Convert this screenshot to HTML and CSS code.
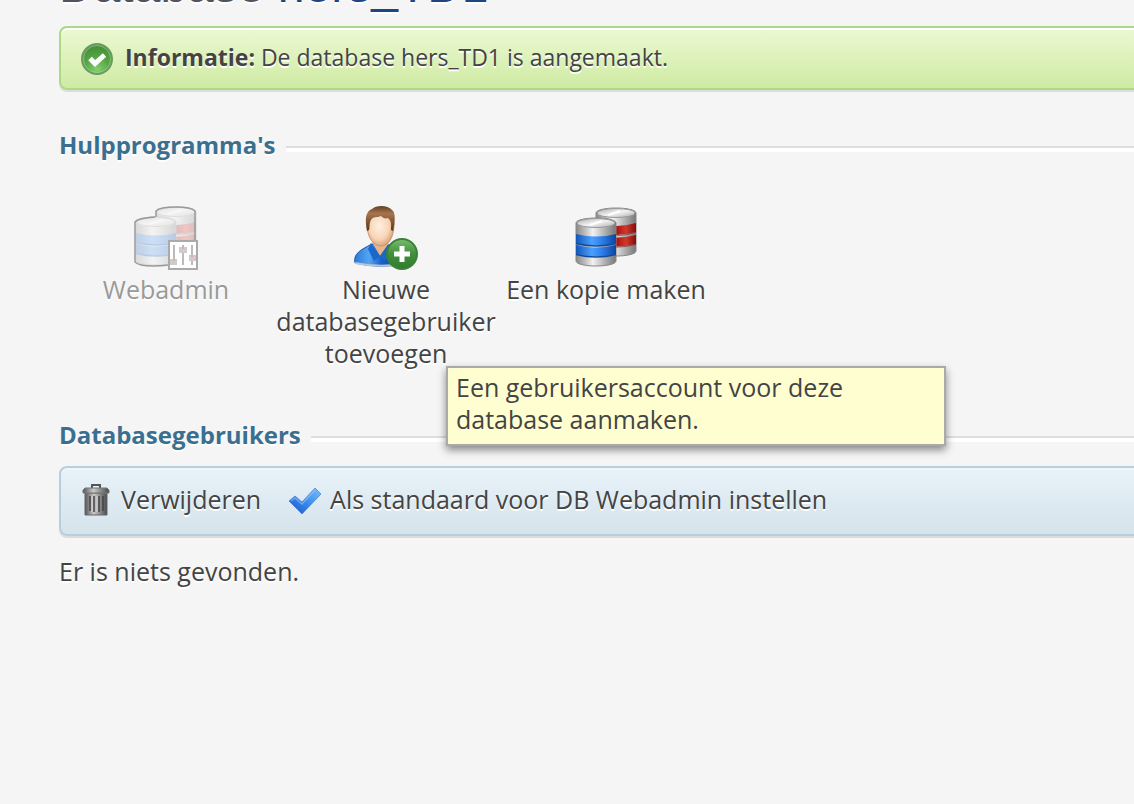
FILE: index.html
```html
<!DOCTYPE html>
<html lang="nl">
<head>
<meta charset="utf-8">
<title>Database hers_TD1</title>
<link rel="stylesheet" href="styles.css">
</head>
<body>
<svg class="defs" aria-hidden="true">
  <defs>
    <linearGradient id="metal"><stop offset="0" stop-color="#888"/><stop offset=".22" stop-color="#bbb"/><stop offset=".42" stop-color="#f2f2f2"/><stop offset=".75" stop-color="#aaa"/><stop offset="1" stop-color="#777"/></linearGradient>
    <linearGradient id="lid" x2="1" y2="1"><stop offset="0" stop-color="#aaa"/><stop offset=".5" stop-color="#f3f3f3"/><stop offset="1" stop-color="#aaa"/></linearGradient>
    <linearGradient id="blue"><stop offset="0" stop-color="#1356b8"/><stop offset=".4" stop-color="#4ba0ff"/><stop offset=".7" stop-color="#2877e2"/><stop offset="1" stop-color="#0c43a0"/></linearGradient>
    <linearGradient id="red"><stop offset="0" stop-color="#a3120e"/><stop offset=".5" stop-color="#a9100c"/><stop offset=".75" stop-color="#d2382d"/><stop offset="1" stop-color="#830d08"/></linearGradient>
    <radialGradient id="green" cx=".5" cy=".85" r=".85"><stop offset="0" stop-color="#86cf70"/><stop offset=".5" stop-color="#55a543"/><stop offset="1" stop-color="#408a38"/></radialGradient>
    <linearGradient id="plus" x2="0" y2="1"><stop offset="0" stop-color="#79bd70"/><stop offset=".5" stop-color="#3f8f3b"/><stop offset="1" stop-color="#2f7d2c"/></linearGradient>
    <radialGradient id="face" cx=".45" cy=".45" r=".6"><stop offset="0" stop-color="#fff0e2"/><stop offset=".6" stop-color="#f8d5b7"/><stop offset="1" stop-color="#d49a70"/></radialGradient>
    <linearGradient id="hair" x2="0" y2="1"><stop offset="0" stop-color="#66401f"/><stop offset=".3" stop-color="#a5754f"/><stop offset="1" stop-color="#5b3517"/></linearGradient>
    <linearGradient id="shirt"><stop offset="0" stop-color="#2b7bd5"/><stop offset=".3" stop-color="#55a5f5"/><stop offset=".55" stop-color="#1762c5"/><stop offset="1" stop-color="#0b429a"/></linearGradient>
    <linearGradient id="tick" x1="0" y1="1" x2="1" y2="0"><stop offset="0" stop-color="#1550c4"/><stop offset=".5" stop-color="#3b8bec"/><stop offset="1" stop-color="#7bc0fb"/></linearGradient>
    <linearGradient id="bin"><stop offset="0" stop-color="#555"/><stop offset=".4" stop-color="#c9c9c9"/><stop offset=".7" stop-color="#888"/><stop offset="1" stop-color="#494949"/></linearGradient>
    <symbol id="databases" viewBox="0 0 64 64">
      <path d="M22 7c0-3 9-5 20-5s20 2 20 5v38c0 3-9 5-20 5s-20-2-20-5z" fill="url(#metal)" stroke="#888"/>
      <path d="M22 18q20 5 40-1v9q-20 6-40 1zM22 30q20 4 40-1v9q-20 5-40 1z" fill="url(#red)"/>
      <path d="M22 27.500q20 5 40-1M22 39.500q20 4 40-1" fill="none" stroke="#722" stroke-opacity=".6"/>
      <ellipse cx="42" cy="7" rx="19" ry="4.500" fill="url(#lid)" stroke="#999"/>
      <path d="m34 9 12-4" stroke="#fff" stroke-width="2"/>
      <path d="M2 17c0-3 9-5 20-5s20 2 20 5v38c0 3-9 5-20 5s-20-2-20-5z" fill="url(#metal)" stroke="#888"/>
      <path d="M2 28q20 5 40 0v9q-20 5-40 0zM2 39q20 5 40 0v9q-20 5-40 0z" fill="url(#blue)"/>
      <path d="M2 37.500q20 5 40 0M2 48.500q20 5 40 0" fill="none" stroke="#104b9d" stroke-width="1.500"/>
      <ellipse cx="22" cy="17" rx="19" ry="4.500" fill="url(#lid)" stroke="#999"/>
      <path d="m16 19 12-4" stroke="#fff" stroke-width="2"/>
    </symbol>
  </defs>
</svg>
<main class="page">
  <h1 class="title">Database <span class="title-name">hers_TD1</span></h1>

  <div class="message" role="status">
    <svg class="icon" viewBox="0 0 32 32" aria-hidden="true">
      <circle cx="16" cy="16" r="15" fill="url(#green)" stroke="#6b9a62" stroke-width="2"/>
      <circle cx="16" cy="16" r="13.500" fill="none" stroke="#a5d99a" stroke-opacity=".6"/>
      <path d="m9 15.500 5 5 9.500-8.500" fill="none" stroke="#fff" stroke-width="5"/>
    </svg>
    <p class="message-text"><b>Informatie:</b> De database hers_TD1 is aangemaakt.</p>
  </div>

  <section class="tools-section">
    <h2 class="legend">Hulpprogramma's</h2>
    <ul class="tools">
      <li class="tool-item">
        <button class="tool" type="button" disabled>
          <svg class="tool-icon" viewBox="0 0 64 64" aria-hidden="true">
            <g opacity=".24"><use href="#databases" width="64" height="64" y="-1"/></g>
            <path d="M22 11V5q4-4 20-4 15 0 19 4v29M35 59q-28 3-34-3V16q3-4 20-5" fill="none" stroke="#999" stroke-width="1.500"/>
            <path d="M35 35h28v28H35z" fill="#fff" stroke="#aaa" stroke-width="2"/>
            <path d="M40 39v20M49 39v20M58 39v20" stroke="#bbb" stroke-width="2"/>
            <path d="M36 53h7v6h-7zM45 41h8v6h-8zM55 49h7v6h-7z" fill="#ccc"/>
            <path d="M39 53h2v2h-2zM48 41h2v2h-2zM57 49h2v2h-2z" fill="#e9aaa5"/>
          </svg>
          <span>Webadmin</span>
        </button>
      </li>
      <li class="tool-item">
        <button class="tool" type="button" aria-describedby="user-tip">
          <svg class="tool-icon" viewBox="0 0 64 64" aria-hidden="true">
            <path d="M1 57c-2-9 5-13 17-19l17 1c8 3 13 7 14 19q-24 5-48-1z" fill="url(#shirt)" stroke="#1d5aa9"/>
            <path d="M1 57q23 5 48 1" fill="none" stroke="#bdc3d2" stroke-width="2"/>
            <path d="m18 36 8 14 9-13z" fill="#e7b48d"/>
            <path d="m17 37 9 13-6 5-6-12zM35 38l-9 12 5 5 8-12z" fill="#1c67ca"/>
            <path d="M13 18q0-14 14-14 13 0 13 14c0 14-6 22-13 22s-14-8-14-22z" fill="url(#face)" stroke="#cb946c"/>
            <path d="M13 25C11 14 11 6 18 3c4-4 16-4 20 1 4 2 3 13 1 21l-2-1c0-6 1-8-3-12-3 1-5 0-7-2-4 2-8 0-10 4-2 3-1 8-2 10z" fill="url(#hair)"/>
            <circle cx="48" cy="48" r="15" fill="url(#plus)" stroke="#3b803b" stroke-width="2"/>
            <path d="M48 40v16M40 48h16" stroke="#fff" stroke-width="5"/>
          </svg>
          <span>Nieuwe databasegebruiker toevoegen</span>
        </button>
        <div class="tooltip" id="user-tip" role="tooltip">Een gebruikersaccount voor deze database aanmaken.</div>
      </li>
      <li class="tool-item">
        <button class="tool" type="button">
          <svg class="tool-icon" aria-hidden="true"><use href="#databases" width="64" height="64"/></svg>
          <span>Een kopie maken</span>
        </button>
      </li>
    </ul>
  </section>

  <section class="users-section">
    <h2 class="legend">Databasegebruikers</h2>
    <div class="toolbar">
      <button class="action" type="button">
        <svg class="icon" viewBox="0 0 32 32" aria-hidden="true">
          <path d="M5 9h22v22H5z" fill="url(#bin)" stroke="#666"/>
          <path d="M10 12v15M14 12v16M19 12v16M23 12v15" stroke="#444" stroke-width="1.500"/>
          <path d="M12 12v16M17 12v16" stroke="#ddd" stroke-width="1"/>
          <path d="M12 5V1h8v4" fill="none" stroke="#555" stroke-width="2"/>
          <path d="M5 4h22l2 2v3H3V6z" fill="url(#bin)" stroke="#777"/>
        </svg>
        <span>Verwijderen</span>
      </button>
      <button class="action" type="button">
        <svg class="icon" viewBox="0 0 32 32" aria-hidden="true">
          <path d="m0 17 6-5 7 6L26 4l6 6-19 20z" fill="url(#tick)" stroke="#3673cf" stroke-opacity=".6"/>
          <path d="m2 17 4-3 7 6L26 6" fill="none" stroke="#a3d2ff" stroke-opacity=".5" stroke-width="1.500"/>
        </svg>
        <span>Als standaard voor DB Webadmin instellen</span>
      </button>
    </div>
    <p class="empty">Er is niets gevonden.</p>
  </section>
</main>
</body>
</html>
```
FILE: styles.css
```css
* { box-sizing: border-box; }
body {
  margin: 0;
  min-height: 100vh;
  overflow: hidden;
  background: #f5f5f5;
  color: #444;
  font: 25px/32px "Trebuchet MS", "Open Sans", sans-serif;
  text-shadow: 0 2px 0 #fff;
}
.defs { position: absolute; width: 0; height: 0; }
.page { margin: -42px -24px 0 0; padding-left: 59px; }
h1, h2, p, ul { margin: 0; padding: 0; }
button {
  padding: 0;
  border: 0;
  background: none;
  color: inherit;
  font: inherit;
  text-shadow: inherit;
  cursor: pointer;
}
.title {
  font: 48px/56px "Liberation Sans", Arial, sans-serif;
  color: #50545f;
}
.title-name { color: #1f4583; }
.message, .toolbar {
  display: flex;
  align-items: center;
  border: 2px solid;
  border-radius: 8px;
}
.message {
  gap: 12px;
  height: 64px;
  margin-top: 12px;
  padding: 2px 20px 0;
  border-color: #acd985;
  background: linear-gradient(#ecf9d3, #cfeaa3);
  box-shadow: 0 2px 0 #ddd, inset 0 2px 0 #fff;
}
.message-text { padding-bottom: 4px; font-size: 23px; }
.icon { display: block; flex: none; width: 32px; height: 32px; }
.tools-section { margin-top: 39px; }
.legend {
  display: flex;
  align-items: center;
  gap: 10px;
  color: #3a6f90;
  font-size: 24px;
  line-height: 32px;
}
.legend::after {
  content: "";
  flex: 1;
  height: 4px;
  margin-top: 8px;
  border-top: 2px solid #ddd;
  background: #fff;
}
.tools {
  display: flex;
  gap: 6px;
  margin-top: 45px;
  list-style: none;
}
.tool-item { position: relative; width: 214px; }
.tool {
  display: flex;
  flex-direction: column;
  align-items: center;
  gap: 3px;
  width: 100%;
}
.tool:disabled { color: #999; cursor: default; }
.tool-icon { display: block; width: 64px; height: 64px; }
.tooltip {
  position: absolute;
  top: 160px;
  left: 167px;
  z-index: 1;
  width: 500px;
  height: 80px;
  padding: 3px 8px;
  border: 2px solid #aaa;
  background: #fffed1;
  box-shadow: 0 4px 8px rgba(0, 0, 0, .45);
  text-shadow: none;
}
.users-section { margin-top: 50px; }
.toolbar {
  gap: 28px;
  height: 70px;
  margin-top: 15px;
  padding: 0 19px 2px;
  border-color: #b8cedd;
  background: linear-gradient(#e8f2f9, #d5e3eb);
  box-shadow: 0 2px 0 #d9dde0, inset 0 2px 0 #edf5fa;
}
.action { display: flex; align-items: center; gap: 9px; }
.action span { padding-bottom: 2px; }
.empty { margin-top: 19px; }
```
